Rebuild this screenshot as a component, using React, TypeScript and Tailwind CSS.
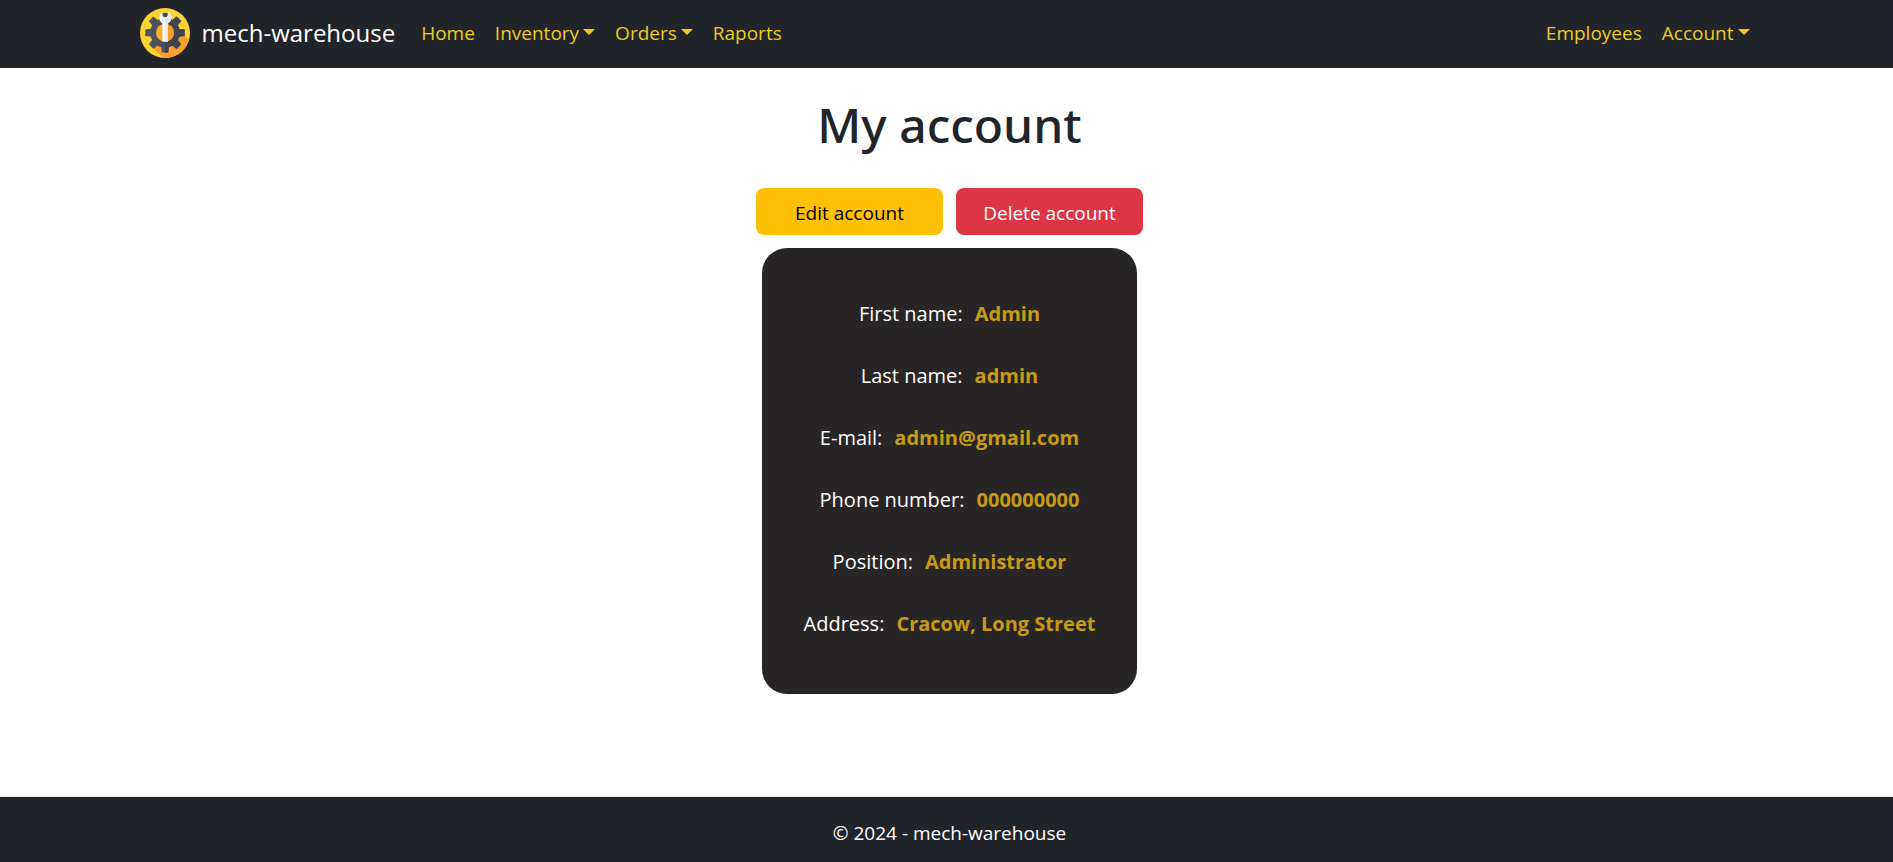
import React from "react";

const details = [
  { label: "First name:", value: "Admin" },
  { label: "Last name:", value: "admin" },
  { label: "E-mail:", value: "admin@gmail.com" },
  { label: "Phone number:", value: "000000000" },
  { label: "Position:", value: "Administrator" },
  { label: "Address:", value: "Cracow, Long Street" },
];

const toothAngles = [0, 45, 90, 135, 180, 225, 270, 315];

function Logo() {
  return (
    <svg viewBox="0 0 50 50" className="size-[50px] shrink-0" aria-hidden="true">
      <defs>
        <clipPath id="disc">
          <circle cx="25" cy="25" r="25" />
        </clipPath>
        <clipPath id="right-half">
          <rect x="25" y="0" width="25" height="50" />
        </clipPath>
        <g id="gear">
          <circle cx="25" cy="24.7" r="14.8" />
          {toothAngles.map((a) => (
            <path key={a} d="M21 12 L21.8 5 H28.2 L29 12 Z" transform={`rotate(${a} 25 24.7)`} />
          ))}
        </g>
      </defs>
      <g clipPath="url(#disc)">
        <rect width="50" height="50" fill="#fdd235" />
        <path d="M39 9.500 L44 27 L60 43 V60 H34 L11.500 38.500 Z" fill="#fba02b" />
        <path d="M30 4 L41 11 L43 22 L34 20 Z" fill="#fdd235" />
      </g>
      <use href="#gear" fill="#4d535d" />
      <use href="#gear" fill="#3f4550" clipPath="url(#right-half)" />
      <circle cx="25" cy="24.7" r="9" fill="#fdae2c" />
      <path d="M25 15.700 a9 9 0 0 1 0 18 Z" fill="#fb9b2c" />
      <path
        d="M22.600 4.200 V8 L24 9.200 H26.400 L27.800 8 V4.200 C30 5.200 31.400 7.100 31.400 9.600 C31.400 12.500 30 14.300 27.800 15.400 V33.600 H22.400 V15.400 C20.400 14.300 19.200 12.500 19.200 9.600 C19.200 7.100 20.400 5.200 22.600 4.200 Z"
        fill="#f9fafc"
      />
      <path
        d="M25.200 9.200 H26.400 L27.800 8 V4.200 C30 5.200 31.400 7.100 31.400 9.600 C31.400 12.500 30 14.300 27.800 15.400 V33.600 H25.200 Z"
        fill="#e3e7f0"
      />
    </svg>
  );
}

function Caret() {
  return (
    <svg viewBox="0 0 12 6" className="mb-0.5 h-[6px] w-3" aria-hidden="true">
      <path d="M0 0 H12 L6 6 Z" fill="currentColor" />
    </svg>
  );
}

function NavItem({ label, menu = false }: { label: string; menu?: boolean }) {
  if (menu) {
    return (
      <button type="button" aria-haspopup="menu" className="flex cursor-pointer items-center gap-1 px-[10px] py-2">
        {label}
        <Caret />
      </button>
    );
  }
  return (
    <a href="#" className="px-[10px] py-2">
      {label}
    </a>
  );
}

export default function App() {
  return (
    <div className="flex min-h-screen flex-col bg-white font-['Open_Sans','Noto_Sans',sans-serif] text-[19px] leading-[30px] text-[#212529]">
      <header className="bg-[#212529] pb-0.5 pl-[6px]">
        <nav className="mx-auto flex h-[66px] max-w-[1650px] items-center px-[15px] text-[#eccb22]">
          <a href="#" className="mr-4 flex items-center gap-3 text-2xl text-white">
            <Logo />
            mech-warehouse
          </a>
          <NavItem label="Home" />
          <NavItem label="Inventory" menu />
          <NavItem label="Orders" menu />
          <NavItem label="Raports" />
          <div className="ml-auto flex">
            <NavItem label="Employees" />
            <NavItem label="Account" menu />
          </div>
        </nav>
      </header>

      <main className="flex flex-1 flex-col items-center pt-[27px] pl-[6px]">
        <h1 className="font-['Noto_Sans',sans-serif] text-[48px] leading-[60px] font-medium">My account</h1>
        <div className="mt-[33px] flex gap-[13px]">
          <button type="button" className="h-[47px] w-[187px] cursor-pointer rounded-lg bg-[#ffc107] pt-0.5 text-black">
            Edit account
          </button>
          <button type="button" className="h-[47px] w-[187px] cursor-pointer rounded-lg bg-[#dc3545] pt-0.5 text-white">
            Delete account
          </button>
        </div>
        <dl className="mt-[13px] mb-8 flex w-[375px] flex-col items-center gap-8 rounded-[25px] bg-[#272525] pt-[51px] pb-[55px] text-xl leading-[30px]">
          {details.map(({ label, value }) => (
            <div key={label} className="flex gap-3 whitespace-nowrap">
              <dt className="text-white">{label}</dt>
              <dd className="font-bold text-[#c59b18]">{value}</dd>
            </div>
          ))}
        </dl>
      </main>

      <footer className="border-t border-[#dee2e6] bg-[#212529] pt-[21px] pb-[14px] pl-[6px] text-center text-white">
        © 2024 - mech-warehouse
      </footer>
    </div>
  );
}
